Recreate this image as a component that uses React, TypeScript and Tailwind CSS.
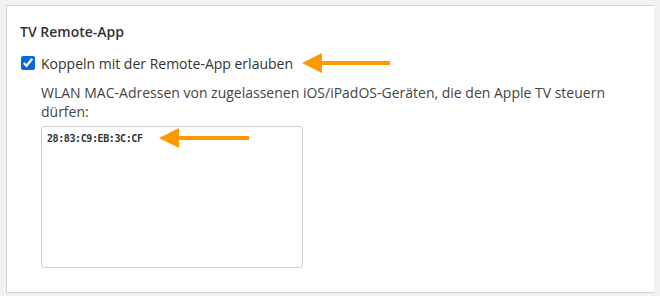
import React from "react";

function Arrow({ className, length }: { className: string; length: number }) {
  return (
    <svg
      className={`absolute pointer-events-none ${className}`}
      width={length}
      height={22}
      viewBox={`0 0 ${length} 22`}
    >
      <polygon points="0,11 20,1 20,21" fill="#ff9900" />
      <rect x={18} y={9} width={length - 18} height={4} fill="#ff9900" />
    </svg>
  );
}

export default function App() {
  return (
    <div
      className="w-[660px] h-[296px] bg-[#f2f2f2] pt-[5px] pl-[6px] text-[#333]"
      style={{ fontFamily: '"Open Sans", "Noto Sans", sans-serif' }}
    >
      <div className="relative w-[648px] h-[288px] bg-white border-l border-t border-b border-[#d4d4d4] pl-[13px] pr-[14px] pt-[16px]">
        <h2 className="text-[14px] leading-[20px] font-semibold">TV Remote-App</h2>

        <label className="mt-[11px] flex items-center gap-[6px] h-[20px] text-[14px]">
          <input
            type="checkbox"
            defaultChecked
            className="ml-px w-[14px] h-[14px] m-0 accent-[#0b66e4]"
          />
          <span>Koppeln mit der Remote-App erlauben</span>
        </label>

        <div className="pl-[21px] mt-[10px]">
          <p className="text-[14px] leading-[19px] text-[#444] pr-[10px]">
            WLAN MAC-Adressen von zugelassenen iOS/iPadOS-Geräten, die den Apple TV steuern dürfen:
          </p>
          <textarea
            className="mt-[5px] block w-[262px] h-[142px] border border-[#cfcfcf] rounded-[3px] px-[5px] py-[5px] text-[10px] leading-[14px] font-semibold tracking-[-0.4px] text-[#333] resize-none outline-none"
            style={{ fontFamily: '"DejaVu Sans Mono", monospace' }}
            defaultValue="28:83:C9:EB:3C:CF"
          />
        </div>

        <Arrow className="left-[295px] top-[46px]" length={88} />
        <Arrow className="left-[152px] top-[121px]" length={90} />
      </div>
    </div>
  );
}
